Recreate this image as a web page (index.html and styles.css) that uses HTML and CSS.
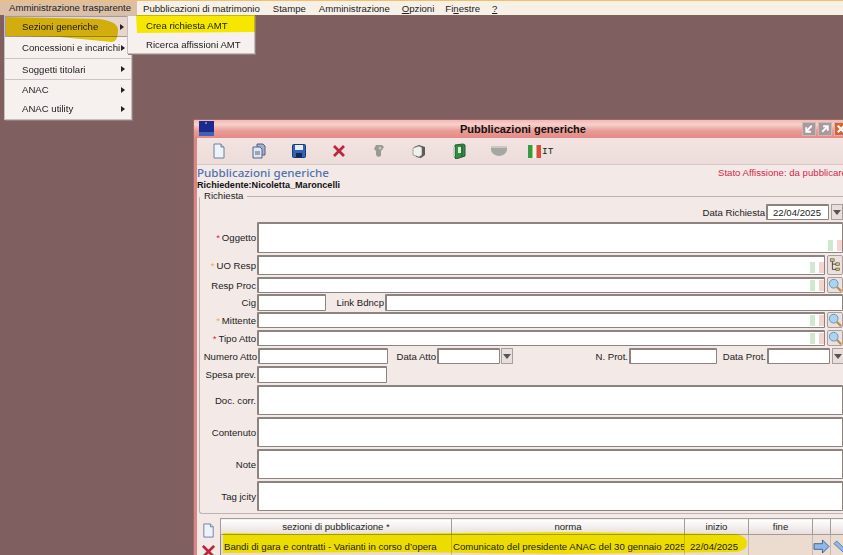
FILE: index.html
```html
<!DOCTYPE html>
<html lang="it">
<head>
<meta charset="utf-8">
<title>Pubblicazioni generiche</title>
<link rel="stylesheet" href="styles.css">
</head>
<body>
<div class="desktop">
  <nav class="menubar">
    <span class="mb-item active">Amministrazione trasparente</span>
    <span class="mb-item">Pubblicazioni di matrimonio</span>
    <span class="mb-item">Stampe</span>
    <span class="mb-item">Amministrazione</span>
    <span class="mb-item"><u>O</u>pzioni</span>
    <span class="mb-item">Fi<u>n</u>estre</span>
    <span class="mb-item"><u>?</u></span>
  </nav>

  <main class="window">
    <header class="titlebar">
      <svg class="logo" viewBox="0 0 15 15"><rect width="15" height="15" fill="#1c2a8c"/><rect y="11" width="15" height="4" fill="#3f62b8"/><circle cx="7" cy="2" r="1" fill="#8ea0e0"/></svg>
      <span class="title">Pubblicazioni generiche</span>
      <div class="winbtns">
        <span class="winbtn"><svg viewBox="0 0 13 13"><path d="M9.500 3 4 8.500M3.500 4.500v5h5" fill="none" stroke="#fff" stroke-width="2"/></svg></span>
        <span class="winbtn"><svg viewBox="0 0 13 13"><path d="M3.500 9.500 9 4M4.500 3.500h5v5" fill="none" stroke="#fff" stroke-width="2"/></svg></span>
        <span class="winbtn close"><svg viewBox="0 0 13 13"><path d="M3 3l7 7M10 3l-7 7" fill="none" stroke="#fff" stroke-width="2.400"/></svg></span>
      </div>
    </header>

    <div class="toolbar">
      <svg class="tool" viewBox="0 0 16 16"><path d="M3 1h7l3 3v11H3z" fill="#eef3fb" stroke="#6f7f9c"/><path d="M10 1v3h3" fill="#cfd9ea" stroke="#6f7f9c"/></svg>
      <svg class="tool" viewBox="0 0 16 16"><path d="M6 1h6l2 2v9H6z" fill="#9fb0cf" stroke="#56627e"/><path d="M2 4h7l2 2v9H2z" fill="#dfe6f3" stroke="#56627e"/><path d="M4 9h5M4 11h5" stroke="#56627e"/></svg>
      <svg class="tool" viewBox="0 0 16 16"><rect x="1.500" y="1.500" width="13" height="13" rx="1" fill="#2f62b8" stroke="#1d3a78"/><rect x="4" y="2" width="8" height="5" fill="#e6eefb"/><rect x="5" y="10" width="6" height="4.500" fill="#16264f"/></svg>
      <svg class="tool" viewBox="0 0 16 16"><path d="M3 3l10 10M13 3 3 13" stroke="#b8283a" stroke-width="2.800"/></svg>
      <svg class="tool" viewBox="0 0 16 16"><path d="M5 2h6l2 2-2 3-1 1v5l-3 1-2-2V8L3 6z" fill="#9a9a94"/><circle cx="9" cy="5" r="1.500" fill="#c6c6c0"/></svg>
      <svg class="tool" viewBox="0 0 16 16"><path d="M3 4l5-2 6 2v8l-4 3-5-1z" fill="#5a5a58"/><path d="M2 5l6-2 3 1.500V12l-3 2-6-2z" fill="#f0f0ee" stroke="#77776f" stroke-width=".6"/></svg>
      <svg class="tool" viewBox="0 0 16 16"><path d="M4 2l8-1 2 1v11l-9 3-1-1z" fill="#2f8f3f" stroke="#265b30"/><path d="M7 4h3v6H7z" fill="#d8ecd8"/><path d="M11 2v12" stroke="#3a4a3a"/><rect x="2" y="4" width="2" height="9" fill="#c9c9c2"/></svg>
      <svg class="tool wide" viewBox="0 0 18 16"><path d="M1 3.500h16v3C17 10 13 13 9 13S1 10 1 6.500z" fill="#a6a6a2"/><path d="M1 3.500h16v1.500H1z" fill="#c8c8c4"/></svg>
      <span class="lang"><svg class="flag" viewBox="0 0 13 13"><rect width="5" height="13" fill="#3c9a3c"/><rect x="4.500" width="4" height="13" fill="#f2f2ec"/><rect x="8.500" width="4.500" height="13" fill="#d8503c"/></svg>IT</span>
    </div>

    <div class="body">
      <div class="heading">
        <div>
          <h1 class="h-title">Pubblicazioni generiche</h1>
          <p class="h-user">Richiedente:Nicoletta_Maroncelli</p>
        </div>
        <p class="h-state">Stato Affissione: da pubblicare</p>
      </div>

      <fieldset class="group">
        <legend class="legend">Richiesta</legend>
        <div class="row date-row">
          <label class="lab-inline">Data Richiesta</label>
          <span class="input date-value">22/04/2025</span>
          <span class="dd gap2"></span>
        </div>

        <div class="row h-31">
          <label class="lab"><i class="req red">*</i>Oggetto</label>
          <span class="input grow"><svg class="tag" viewBox="0 0 14 11"><rect width="14" height="11" fill="#fff"/><rect width="5" height="11" fill="#cfe8cf"/><rect x="9" width="5" height="11" fill="#f5d3cf"/></svg></span>
        </div>
        <div class="row h-20">
          <label class="lab"><i class="req amber">*</i>UO Resp</label>
          <span class="input grow"><svg class="tag" viewBox="0 0 14 11"><rect width="14" height="11" fill="#fff"/><rect width="5" height="11" fill="#cfe8cf"/><rect x="9" width="5" height="11" fill="#f5d3cf"/></svg></span>
          <span class="side"><svg viewBox="0 0 14 16"><path d="M4 2v11h5M4 7h5" fill="none" stroke="#333"/><rect x="2" y="1" width="4" height="3" fill="#d8c860" stroke="#333" stroke-width=".6"/><rect x="8" y="5.500" width="4" height="3" fill="#d8c860" stroke="#333" stroke-width=".6"/><rect x="8" y="11.500" width="4" height="3" fill="#d8c860" stroke="#333" stroke-width=".6"/></svg></span>
        </div>
        <div class="row h-16 before-cig">
          <label class="lab">Resp Proc</label>
          <span class="input grow"><svg class="tag" viewBox="0 0 14 11"><rect width="14" height="11" fill="#fff"/><rect width="5" height="11" fill="#cfe8cf"/><rect x="9" width="5" height="11" fill="#f5d3cf"/></svg></span>
          <span class="side"><svg viewBox="0 0 16 16"><path d="M10 10l5 5" stroke="#c98a3a" stroke-width="2.500"/><circle cx="6.500" cy="6.500" r="5" fill="#a9d4f2" stroke="#5c8fb8"/></svg></span>
        </div>
        <div class="row h-17 before-cig">
          <label class="lab">Cig</label>
          <span class="input w-69"></span>
          <label class="lab-link">Link Bdncp</label>
          <span class="input grow"></span>
        </div>
        <div class="row h-16">
          <label class="lab"><i class="req amber">*</i>Mittente</label>
          <span class="input grow"><svg class="tag" viewBox="0 0 14 11"><rect width="14" height="11" fill="#fff"/><rect width="5" height="11" fill="#cfe8cf"/><rect x="9" width="5" height="11" fill="#f5d3cf"/></svg></span>
          <span class="side"><svg viewBox="0 0 16 16"><path d="M10 10l5 5" stroke="#c98a3a" stroke-width="2.500"/><circle cx="6.500" cy="6.500" r="5" fill="#a9d4f2" stroke="#5c8fb8"/></svg></span>
        </div>
        <div class="row h-16">
          <label class="lab"><i class="req red">*</i>Tipo Atto</label>
          <span class="input grow"><svg class="tag" viewBox="0 0 14 11"><rect width="14" height="11" fill="#fff"/><rect width="5" height="11" fill="#cfe8cf"/><rect x="9" width="5" height="11" fill="#f5d3cf"/></svg></span>
          <span class="side"><svg viewBox="0 0 16 16"><path d="M10 10l5 5" stroke="#c98a3a" stroke-width="2.500"/><circle cx="6.500" cy="6.500" r="5" fill="#a9d4f2" stroke="#5c8fb8"/></svg></span>
        </div>
        <div class="row h-16">
          <label class="lab lab-num">Numero Atto</label>
          <span class="input w-130"></span>
          <label class="lab-a">Data Atto</label>
          <span class="input w-63"></span>
          <span class="dd"></span>
          <label class="lab-b">N. Prot.</label>
          <span class="input w-88"></span>
          <label class="lab-c">Data Prot.</label>
          <span class="input w-63"></span>
          <span class="dd gap2"></span>
        </div>
        <div class="row h-17">
          <label class="lab">Spesa prev.</label>
          <span class="input w-130"></span>
        </div>
        <div class="row h-30"><label class="lab">Doc. corr.</label><span class="input grow"></span></div>
        <div class="row h-30"><label class="lab">Contenuto</label><span class="input grow"></span></div>
        <div class="row h-30"><label class="lab">Note</label><span class="input grow"></span></div>
        <div class="row h-30"><label class="lab">Tag jcity</label><span class="input grow"></span></div>
      </fieldset>

      <section class="grid-wrap">
        <div class="grid-tools">
          <svg viewBox="0 0 16 16" class="gt"><path d="M3 1h7l3 3v11H3z" fill="#eef3fb" stroke="#6f7f9c"/><path d="M10 1v3h3" fill="#cfd9ea" stroke="#6f7f9c"/></svg>
          <svg viewBox="0 0 16 16" class="gt"><path d="M2 2l12 12M14 2 2 14" stroke="#b8283a" stroke-width="3"/></svg>
        </div>
        <table class="grid">
          <colgroup>
            <col class="c1"><col class="c2"><col class="c3"><col class="c4"><col class="c5"><col class="c6">
          </colgroup>
          <thead>
            <tr><th>sezioni di pubblicazione *</th><th>norma</th><th>inizio</th><th>fine</th><th></th><th></th></tr>
          </thead>
          <tbody>
            <tr>
              <td>Bandi di gara e contratti - Varianti in corso d’opera</td>
              <td class="norma">Comunicato del presidente ANAC del 30 gennaio 2025</td>
              <td class="ctr">22/04/2025</td>
              <td></td>
              <td class="ico"><svg viewBox="0 0 18 16"><path d="M1 5h9V1l7 7-7 7v-4H1z" fill="#8fb8e8" stroke="#3a5f98"/></svg></td>
              <td class="ico"><svg viewBox="0 0 16 16"><path d="M2 5l3-3 9 9-2 3z" fill="#8fb8e8" stroke="#5c7fa8"/></svg></td>
            </tr>
          </tbody>
        </table>
      </section>
    </div>
  </main>

  <div class="menu menu-main">
    <div class="mi hl"><span>Sezioni generiche</span><b class="arrow"></b></div>
    <div class="mi"><span>Concessioni e incarichi</span><b class="arrow"></b></div>
    <div class="mi"><span>Soggetti titolari</span><b class="arrow"></b></div>
    <div class="mi short"><span>ANAC</span><b class="arrow"></b></div>
    <div class="mi short"><span>ANAC utility</span><b class="arrow"></b></div>
  </div>
  <div class="menu menu-sub">
    <div class="si">Crea richiesta AMT</div>
    <div class="si">Ricerca affissioni AMT</div>
  </div>

  <svg class="marks" viewBox="0 0 843 555">
    <path d="M136 15 H255 V32 L137 33 Z" fill="#fff600"/>
    <path d="M6 17 L98 19 Q118 21 118 30 Q118 42 112 42 L60 37 L6 36 Z" fill="#e6d010"/>
    <path d="M223 533 L300 534 L451 533 L560 532 L736 534 Q747 536 747 543 Q747 551 736 552 L560 554 L400 552 L223 553 Z" fill="#ffff00"/>
  </svg>
</div>
</body>
</html>
```

FILE: styles.css
```css
* { box-sizing: border-box; }
html, body { margin: 0; height: 100%; }
body { overflow: hidden; background: #7f5f60; font-family: "Liberation Sans", Arial, sans-serif; font-size: 9.600px; color: #222; }
.desktop { position: relative; width: 843px; height: 555px; overflow: hidden; filter: blur(.3px); }

.menubar { display: flex; height: 15px; background: #f6f0e6; border-top: 1px solid #f4bf6c; align-items: center; line-height: 13px; }
.mb-item { white-space: nowrap; }
.mb-item.active { background: #dcbfa5; width: 137px; height: 14px; padding-left: 9px; margin-right: 6px; }
.mb-item:nth-child(3) { margin-left: 13px; }
.mb-item:nth-child(4) { margin-left: 13px; }
.mb-item:nth-child(5) { margin-left: 12px; }
.mb-item:nth-child(6) { margin-left: 11px; }
.mb-item:nth-child(7) { margin-left: 12px; }

.window { position: absolute; left: 193px; top: 119px; width: 660px; height: 440px; background: #d98684; padding: 1px 4px 0; display: flex; flex-direction: column; box-shadow: 0 0 0 1px #9a6a6a inset; overflow: hidden; }
.titlebar { position: relative; flex: none; height: 18px; margin: 0 -3px; padding: 0 3px; display: flex; align-items: center; justify-content: center; background: linear-gradient(#f4b8b4 0, #f7d0cc 25%, #ea9c98 60%, #e48a86 100%); }
.logo { position: absolute; left: 5px; top: 1px; width: 15px; height: 15px; }
.title { font: bold 11px "Liberation Sans", sans-serif; color: #111; }
.winbtns { position: absolute; left: 608px; top: 2px; display: flex; gap: 2px; }
.winbtn { width: 14px; height: 14px; background: #a89a9a; border: 1px solid #c9b9b9; display: block; }
.winbtn svg { display: block; width: 12px; height: 12px; }
.winbtn.close { background: #e0602c; }

.toolbar { flex: none; height: 27px; background: linear-gradient(#f2e4e2, #ecdcda); border-bottom: 1px solid #d5c7c5; display: flex; align-items: center; padding-left: 14px; gap: 24px; }
.tool { width: 16px; height: 16px; flex: none; }
.tool.wide { width: 18px; margin-left: -1px; }
.lang { display: flex; align-items: center; gap: 1px; font: 9.500px "Liberation Mono", monospace; color: #222; margin-left: -4px; }
.flag { width: 13px; height: 13px; }

.body { flex: none; background: #f3e9e7; width: 654px; height: 400px; }
.heading { display: flex; justify-content: space-between; height: 30px; padding-top: 1px; }
.h-title { margin: 0; font: 500 11.600px/14px "Noto Sans", sans-serif; color: #4f74ae; }
.h-user { margin: 0; font: bold 9.100px/10px "Liberation Sans", sans-serif; color: #111; }
.h-state { margin: 0 0 0 auto; line-height: 13px; color: #d3284a; width: 133px; white-space: nowrap; }

.group { margin: -4px 0 0 2px; padding: 3px 0 0; border: 1px solid #bcb2b0; border-right: 0; width: 652px; border-radius: 3px 0 0 3px; min-width: 0; }
.legend { padding: 0 4px; line-height: 10px; }

.row { display: flex; align-items: center; margin-bottom: 2px; padding-right: 8px; }
.row.before-cig { margin-bottom: 1px; }
.date-row { height: 16px; justify-content: flex-end; }
.lab-inline { margin-right: 1px; }
.date-value { width: 63px; height: 16px; padding-left: 5px; line-height: 13px; border-width: 1px; }
.lab { width: 57px; flex: none; text-align: right; padding-right: 1px; white-space: nowrap; }
.lab-num { width: 58px; }
.input { display: block; position: relative; background: #fff; border: 2px solid #8d8482; border-right-width: 1px; border-bottom-width: 1px; border-radius: 1px; height: 100%; flex: none; }
.grow { flex: 1; }
.h-31 { height: 31px; }
.h-30 { height: 30px; }
.h-20 { height: 20px; }
.h-17 { height: 17px; }
.h-16 { height: 16px; }
.w-69 { width: 69px; }
.w-63 { width: 63px; }
.w-88 { width: 88px; }
.w-130 { width: 130px; }
.lab-link { width: 59px; text-align: right; padding-right: 1px; flex: none; white-space: nowrap; }
.lab-a { width: 49px; text-align: right; padding-right: 1px; flex: none; }
.lab-b { width: 116px; text-align: right; padding-right: 1px; flex: none; }
.lab-c { width: 50px; text-align: right; padding-right: 1px; flex: none; }
.req { font-style: normal; margin-right: 2px; }
.red { color: #d8283a; }
.amber { color: #f0a838; }
.tag { position: absolute; right: 0; bottom: 1px; width: 14px; height: 11px; }
.side { width: 16px; height: 100%; flex: none; margin-left: 2px; background: #ebe0de; border: 1px solid #a89e9c; border-radius: 2px; display: flex; align-items: center; justify-content: center; }
.side svg { width: 14px; height: 14px; display: block; }
.dd { position: relative; width: 12px; height: 16px; flex: none; margin-left: 1px; background: #e8dedc; border: 1px solid #a89e9c; }
.dd.gap2 { margin-left: 2px; }
.dd::after { content: ""; position: absolute; left: 1px; top: 5px; border: 4px solid transparent; border-top: 5px solid #555; border-bottom: 0; }

.grid-wrap { display: flex; margin-top: 4px; }
.grid-tools { width: 23px; flex: none; padding: 5px 0 0 4px; display: flex; flex-direction: column; gap: 6px; }
.gt { width: 15px; height: 15px; display: block; }
.grid { width: 640px; flex: none; border-collapse: collapse; table-layout: fixed; border: 1px solid #888; }
.c1 { width: 231px; } .c2 { width: 233px; } .c3 { width: 64px; } .c4 { width: 64px; } .c5 { width: 18px; } .c6 { width: 30px; }
.grid th { height: 16px; padding: 0; font-weight: 400; background: linear-gradient(#fff, #e8dedc); border: 1px solid #a59c9a; text-align: center; }
.grid td { height: 21px; padding: 0 0 0 3px; background: #ecdcd0; border-right: 1px solid #c4b8b6; white-space: nowrap; overflow: hidden; }
.grid td.norma { padding-left: 1px; }
.grid td.ctr { padding-left: 5px; }
.grid td.ico { padding: 0; }
.ico svg { width: 17px; height: 15px; display: block; }
.marks { position: absolute; inset: 0; width: 843px; height: 555px; mix-blend-mode: multiply; pointer-events: none; }

.menu { position: absolute; background: #f6f0ee; border: 1px solid #c9bdbb; box-shadow: 1px 1px 0 #8f7f7f; }
.menu-main { left: 4px; top: 15px; width: 128px; height: 105px; }
.mi { display: flex; align-items: center; justify-content: space-between; height: 22px; padding: 0 6px 0 17px; border-bottom: 1px solid #cfc3c1; white-space: nowrap; }
.mi:nth-child(3) { height: 21px; }
.mi.short { height: 19px; border-bottom: 0; }
.mi.hl { height: 21px; background: #e8d6cc; border: 1px solid #a89a98; box-shadow: 0 2px 0 -1px #f6f0ee; padding-left: 16px; }
.arrow { width: 0; height: 0; border: 3.500px solid transparent; border-left: 4px solid #222; border-right: 0; }
.menu-sub { left: 127px; top: 15px; width: 128px; height: 39px; padding-top: 1px; }
.si { height: 19px; padding-left: 18px; line-height: 18px; white-space: nowrap; }
```
